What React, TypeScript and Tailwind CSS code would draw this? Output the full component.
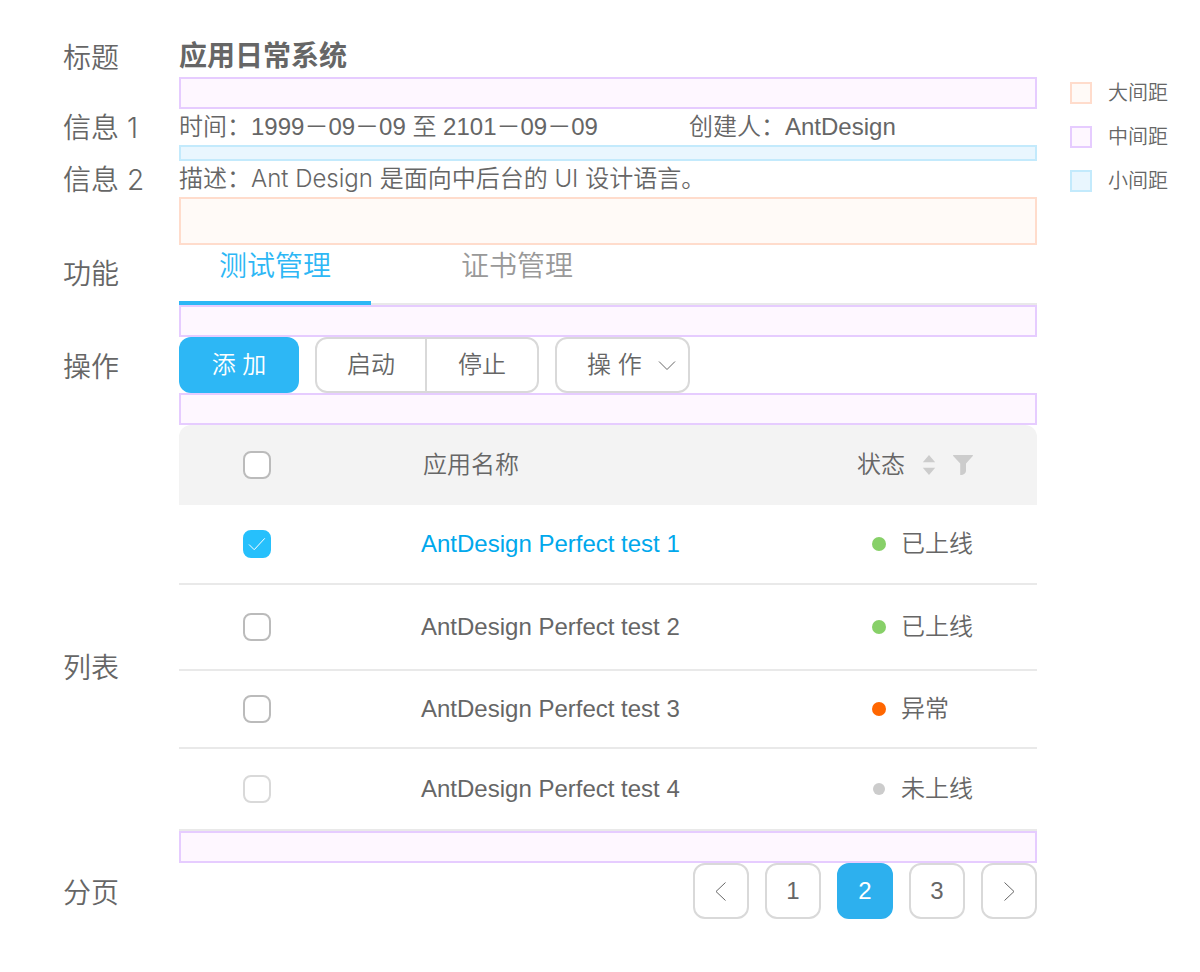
import type { ReactNode } from 'react';

type GapSize = 'large' | 'middle' | 'small';

const gapStyle: Record<GapSize, string> = {
  large: 'border-[#ffdccc] bg-[#fffaf7]',
  middle: 'border-[#e6ccff] bg-[#fef7ff]',
  small: 'border-[#c3eafc] bg-[#e9f6fe]',
};

const gapHeight: Record<GapSize, string> = {
  large: 'h-12',
  middle: 'h-8',
  small: 'h-4',
};

const legend: Array<{ size: GapSize; label: string }> = [
  { size: 'large', label: '大间距' },
  { size: 'middle', label: '中间距' },
  { size: 'small', label: '小间距' },
];

const apps = [
  { name: 'AntDesign Perfect test 1', status: '已上线', dot: 'size-[14px] bg-[#87d068]', height: 'h-20', checked: true, disabled: false },
  { name: 'AntDesign Perfect test 2', status: '已上线', dot: 'size-[14px] bg-[#87d068]', height: 'h-[86px]', checked: false, disabled: false },
  { name: 'AntDesign Perfect test 3', status: '异常', dot: 'size-[14px] bg-[#ff6600]', height: 'h-[78px]', checked: false, disabled: false },
  { name: 'AntDesign Perfect test 4', status: '未上线', dot: 'size-3 bg-[#ccc]', height: 'h-[82px]', checked: false, disabled: true },
];

function Gap({ size }: { size: GapSize }) {
  return <div className={`ml-[116px] border-2 ${gapHeight[size]} ${gapStyle[size]}`} />;
}

function Row({ label, labelClass = 'pt-0.5', children }: { label: string; labelClass?: string; children: ReactNode }) {
  return (
    <section className="flex items-center">
      <div className={`w-[116px] shrink-0 font-['Inter','Noto_Sans_CJK_SC',sans-serif] text-[28px] leading-[34px] whitespace-pre ${labelClass}`}>{label}</div>
      <div className="min-w-0 flex-1">{children}</div>
    </section>
  );
}

function Checkbox({ label, checked = false, disabled = false }: { label: string; checked?: boolean; disabled?: boolean }) {
  return (
    <span className="grid size-7">
      <input
        type="checkbox"
        aria-label={label}
        defaultChecked={checked}
        disabled={disabled}
        className="peer col-start-1 row-start-1 size-7 appearance-none rounded-lg border-2 border-[#bbb] bg-white checked:border-[#26c0fc] checked:bg-[#26c0fc] disabled:border-[#d9d9d9]"
      />
      <svg viewBox="0 0 28 28" fill="none" stroke="white" className="pointer-events-none col-start-1 row-start-1 hidden size-7 peer-checked:block">
        <path d="M6 14.5L11.2 19.7L21.8 8.3" />
      </svg>
    </span>
  );
}

const pageButton = 'flex size-14 items-center justify-center rounded-xl border-2';

export default function App() {
  return (
    <main className="flex bg-white pt-9 pl-[63px] font-['Liberation_Sans','Noto_Sans_CJK_SC',sans-serif] text-2xl leading-9 font-[350] text-[#666]">
      <div className="min-w-0 flex-1">
        <Row label="标题">
          <h1 className="pt-[1px] text-[28px] leading-10 font-bold">应用日常系统</h1>
        </Row>
        <Gap size="middle" />
        <Row label="信息 1">
          <div className="flex">
            <p className="w-[510px]">时间：1999－09－09 至 2101－09－09</p>
            <p>创建人：AntDesign</p>
          </div>
        </Row>
        <Gap size="small" />
        <Row label="信息 2">
          <p className="font-['Inter','Noto_Sans_CJK_SC',sans-serif]">描述：Ant Design 是面向中后台的 UI 设计语言。</p>
        </Row>
        <Gap size="large" />

        <Row label="功能" labelClass="pb-0.5">
          <div role="tablist" className="flex gap-[50px] border-b-2 border-[#e9e9e9] text-[28px] leading-[44px]">
            <button type="button" role="tab" aria-selected="true" className="-mb-0.5 w-48 border-b-4 border-[#2db7f5] pb-3 text-[#2db7f5]">
              测试管理
            </button>
            <button type="button" role="tab" aria-selected="false" className="-mb-0.5 w-48 border-b-4 border-transparent pb-3 text-[#999]">
              证书管理
            </button>
          </div>
        </Row>
        <Gap size="middle" />

        <Row label="操作" labelClass="pt-1">
          <div className="flex gap-4">
            <button type="button" className="h-14 w-[120px] rounded-xl bg-[#2db7f5] text-white">
              添 加
            </button>
            <div className="flex h-14 rounded-xl border-2 border-[#d9d9d9]">
              <button type="button" className="w-[110px] border-r-2 border-[#d9d9d9]">
                启动
              </button>
              <button type="button" className="w-[110px]">
                停止
              </button>
            </div>
            <div className="relative">
              <select aria-label="操作" className="h-14 w-[135px] appearance-none rounded-xl border-2 border-[#d9d9d9] bg-white pl-[30px]">
                <option>操 作</option>
              </select>
              <svg viewBox="0 0 18 10" fill="none" stroke="currentColor" className="pointer-events-none absolute top-6 right-[14px] h-[10px] w-[18px]">
                <path d="M1 .5L9 8.5L17 .5" />
              </svg>
            </div>
          </div>
        </Row>
        <Gap size="middle" />

        <Row label="列表" labelClass="pt-20">
          <table className="w-full table-fixed border-separate border-spacing-0 text-left">
            <thead>
              <tr className="h-20">
                <th className="w-[242px] rounded-tl-xl bg-[#f3f3f3] pl-16">
                  <Checkbox label="全选" />
                </th>
                <th className="bg-[#f3f3f3] pl-0.5 font-[350]">应用名称</th>
                <th className="w-[180px] rounded-tr-xl bg-[#f3f3f3] font-[350]">
                  <div className="flex items-center">
                    状态
                    <svg viewBox="0 0 14 20" fill="#ccc" className="ml-[17px] h-5 w-[14px]">
                      <path d="M7 0L13.2 7.3H.8zM7 20L13.2 12.7H.8z" />
                    </svg>
                    <svg viewBox="0 0 20 20" fill="#ccc" className="ml-[17px] size-5">
                      <path d="M.6 0H19.4C20 0 20.2 .6 19.8 1.1L13 8.6V15.5C13 18.2 11 20 7.2 20V8.6L.2 1.1C-.2 .6 0 0 .6 0z" />
                    </svg>
                  </div>
                </th>
              </tr>
            </thead>
            <tbody>
              {apps.map((app) => (
                <tr key={app.name} className={app.height}>
                  <td className="border-b-2 border-[#e9e9e9] pl-16">
                    <Checkbox label={app.name} checked={app.checked} disabled={app.disabled} />
                  </td>
                  <td className="border-b-2 border-[#e9e9e9]">
                    <a href="#" className={app.checked ? 'text-[#00a8ec]' : ''}>
                      {app.name}
                    </a>
                  </td>
                  <td className="border-b-2 border-[#e9e9e9]">
                    <div className="flex items-center gap-[15px] pl-[15px]">
                      <span className="flex w-[14px] justify-center">
                        <span className={`rounded-full ${app.dot}`} />
                      </span>
                      {app.status}
                    </div>
                  </td>
                </tr>
              ))}
            </tbody>
          </table>
        </Row>
        <Gap size="middle" />

        <Row label="分页" labelClass="pt-1">
          <nav aria-label="分页" className="flex justify-end gap-4">
            <button type="button" aria-label="上一页" className={`${pageButton} border-[#d9d9d9]`}>
              <svg viewBox="0 0 12 20" fill="none" stroke="currentColor" className="h-5 w-3">
                <path d="M10.5 1.5L1 10.5L10.5 19.5" />
              </svg>
            </button>
            <button type="button" className={`${pageButton} border-[#d9d9d9]`}>
              1
            </button>
            <button type="button" aria-current="page" className={`${pageButton} border-[#2db0ee] bg-[#2db0ee] text-white`}>
              2
            </button>
            <button type="button" className={`${pageButton} border-[#d9d9d9]`}>
              3
            </button>
            <button type="button" aria-label="下一页" className={`${pageButton} border-[#d9d9d9]`}>
              <svg viewBox="0 0 12 20" fill="none" stroke="currentColor" className="h-5 w-3">
                <path d="M1.5 1.5L11 10.5L1.5 19.5" />
              </svg>
            </button>
          </nav>
        </Row>
      </div>

      <aside className="w-[163px] shrink-0 pt-[35px] pl-[33px]">
        <ul className="flex flex-col text-xl leading-[44px]">
          {legend.map((item) => (
            <li key={item.size} className="flex items-center gap-4">
              <span className={`size-[22px] border-2 ${gapStyle[item.size]}`} />
              {item.label}
            </li>
          ))}
        </ul>
      </aside>
    </main>
  );
}
